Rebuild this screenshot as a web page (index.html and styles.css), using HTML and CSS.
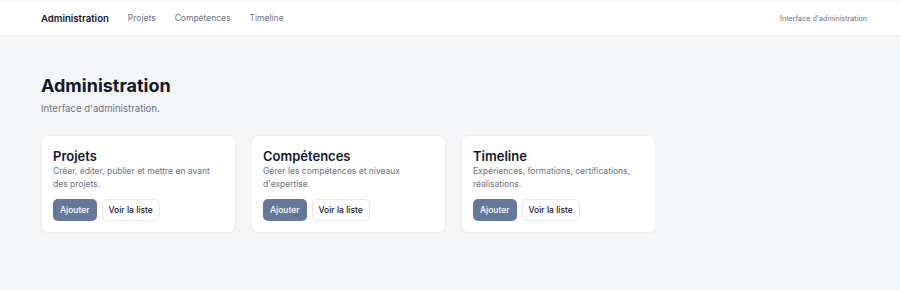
FILE: index.html
```html
<!DOCTYPE html>
<html lang="fr">
<head>
<meta charset="utf-8">
<title>Administration</title>
<link rel="stylesheet" href="styles.css">
</head>
<body>
<header class="topbar">
  <nav class="nav">
    <a class="brand" href="#">Administration</a>
    <a class="nav-link" href="#">Projets</a>
    <a class="nav-link" href="#">Compétences</a>
    <a class="nav-link" href="#">Timeline</a>
  </nav>
  <span class="nav-note">Interface d'administration</span>
</header>
<main class="main">
  <h1 class="title">Administration</h1>
  <p class="subtitle">Interface d'administration.</p>
  <section class="cards">
    <article class="card">
      <h2 class="card-title">Projets</h2>
      <p class="card-text">Créer, éditer, publier et mettre en avant des projets.</p>
      <div class="actions">
        <a class="btn btn-primary" href="#">Ajouter</a>
        <a class="btn btn-outline" href="#">Voir la liste</a>
      </div>
    </article>
    <article class="card">
      <h2 class="card-title">Compétences</h2>
      <p class="card-text">Gérer les compétences et niveaux d'expertise.</p>
      <div class="actions">
        <a class="btn btn-primary" href="#">Ajouter</a>
        <a class="btn btn-outline" href="#">Voir la liste</a>
      </div>
    </article>
    <article class="card">
      <h2 class="card-title">Timeline</h2>
      <p class="card-text">Expériences, formations, certifications, réalisations.</p>
      <div class="actions">
        <a class="btn btn-primary" href="#">Ajouter</a>
        <a class="btn btn-outline" href="#">Voir la liste</a>
      </div>
    </article>
  </section>
</main>
</body>
</html>
```
FILE: styles.css
```css
* { box-sizing: border-box; }
html, body { margin: 0; padding: 0; }
body {
  font-family: Inter, "Noto Sans", sans-serif;
  background: #f5f6f8;
  color: #111827;
  -webkit-font-smoothing: antialiased;
}
a { text-decoration: none; color: inherit; }

.topbar {
  height: 36px;
  background: #ffffff;
  border-top: 1px solid #f3f4f6;
  border-bottom: 1px solid #e8eaee;
  display: flex;
  align-items: center;
  justify-content: space-between;
  padding: 0 33px 0 41px;
}
.nav { display: flex; align-items: center; gap: 19px; }
.brand { font-size: 9.6px; font-weight: 600; color: #111827; }
.nav-link { font-size: 8.5px; color: #6b7280; }
.nav-note { font-size: 7.2px; color: #6b7280; }

.main { padding: 38px 41px 0 41px; }
.title {
  margin: 0;
  font-size: 18px;
  font-weight: 700;
  color: #111827;
  line-height: 24px;
}
.subtitle {
  margin: 4px 0 0 0;
  font-size: 9.6px;
  color: #6b7280;
  line-height: 14px;
}
.cards {
  margin-top: 19px;
  display: grid;
  grid-template-columns: repeat(3, 195px);
  gap: 15px;
}
.card {
  background: #ffffff;
  border: 1px solid #eceef1;
  border-radius: 7px;
  padding: 11px 11px 11px 11px;
  box-shadow: 0 1px 2px rgba(17, 24, 39, 0.04);
  height: 98px;
}
.card-title {
  margin: 0;
  font-size: 13px;
  font-weight: 600;
  color: #111827;
  line-height: 18px;
}
.card-text {
  margin: 0;
  font-size: 8.5px;
  line-height: 13px;
  color: #6b7280;
}
.actions { display: flex; gap: 5px; margin-top: 8px; }
.btn {
  display: inline-flex;
  align-items: center;
  height: 22px;
  padding: 0 7px;
  border-radius: 5px;
  font-size: 8.5px;
  font-weight: 500;
}
.btn-primary { background: #66789a; color: #ffffff; }
.btn-outline { background: #ffffff; border: 1px solid #e5e7eb; color: #111827; padding: 0 6px; }
```
